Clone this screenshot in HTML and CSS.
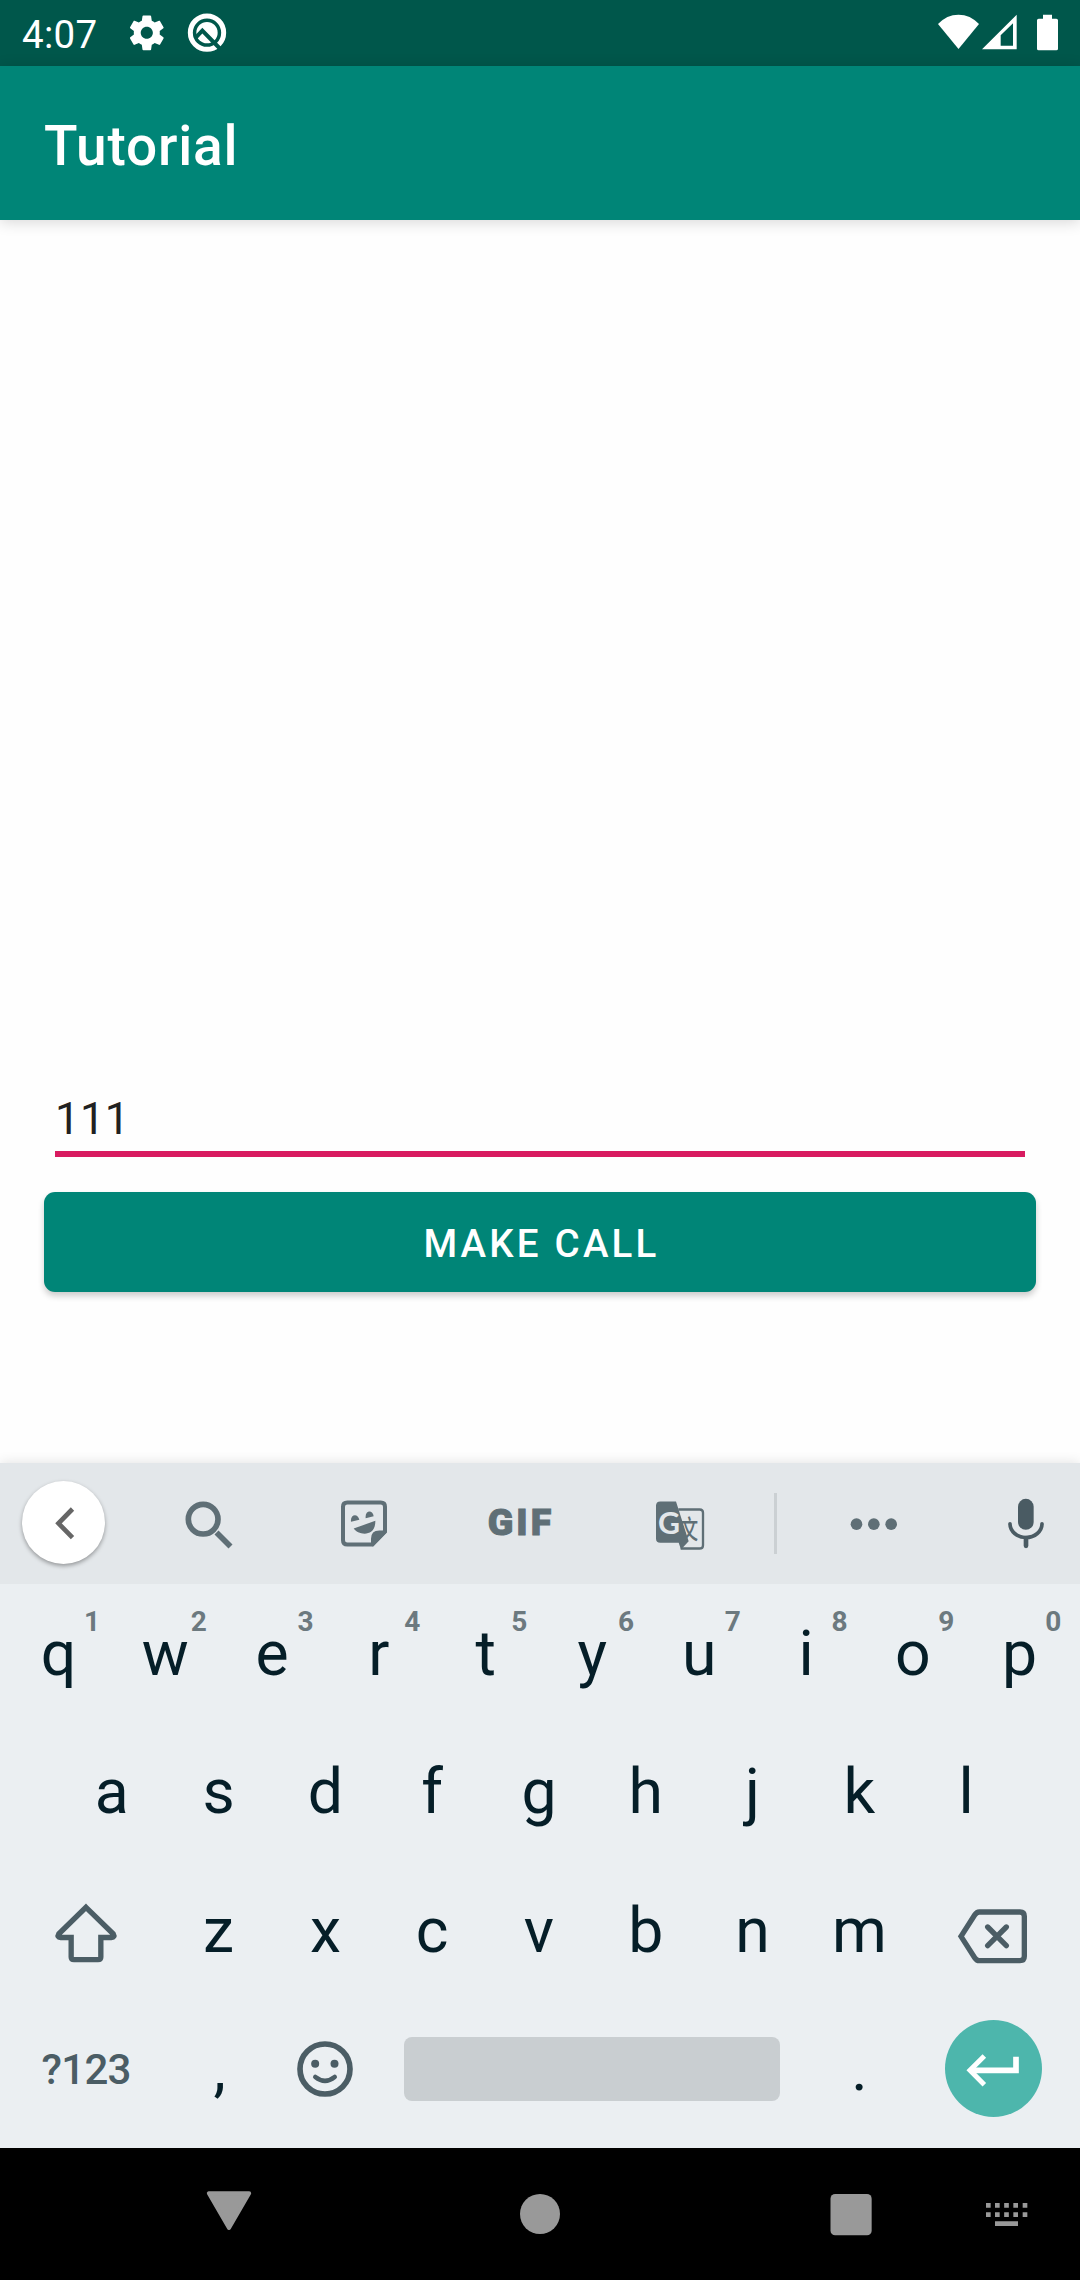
FILE: index.html
```html
<!DOCTYPE html>
<html lang="en">
<head>
<meta charset="utf-8">
<title>Tutorial</title>
<link rel="stylesheet" href="styles.css">
</head>
<body>
<div class="screen">
  <header class="status">
    <span class="clock">4:07</span>
    <svg class="gear" viewBox="0 0 24 24"><path d="M19.43 12.98c.04-.32.07-.64.07-.98s-.03-.66-.07-.98l2.11-1.65c.19-.15.24-.42.12-.64l-2-3.46c-.12-.22-.39-.3-.61-.22l-2.49 1c-.52-.4-1.08-.73-1.69-.98l-.38-2.65C14.46 2.18 14.25 2 14 2h-4c-.25 0-.46.18-.49.42l-.38 2.65c-.61.25-1.17.59-1.69.98l-2.49-1c-.23-.09-.49 0-.61.22l-2 3.46c-.13.22-.07.49.12.64l2.11 1.65c-.04.32-.07.65-.07.98s.03.66.07.98l-2.11 1.65c-.19.15-.24.42-.12.64l2 3.46c.12.22.39.3.61.22l2.49-1c.52.4 1.08.73 1.69.98l.38 2.65c.03.24.24.42.49.42h4c.25 0 .46-.18.49-.42l.38-2.65c.61-.25 1.17-.59 1.69-.98l2.49 1c.23.09.49 0 .61-.22l2-3.46c.12-.22.07-.49-.12-.64l-2.11-1.65zM12 15.5c-1.93 0-3.5-1.57-3.5-3.5s1.57-3.5 3.5-3.5 3.5 1.57 3.5 3.5-1.57 3.5-3.5 3.5z"/></svg>
    <svg class="debug" viewBox="562 40 120 120"><circle class="ring" cx="622" cy="99" r="50"/><circle cx="622" cy="99" r="32"/><path class="cut" d="M586 116L608 93L662 148"/></svg>
    <span class="spacer"></span>
    <svg class="wifi" viewBox="114 40 123 120"><path d="M114 73Q140 45 175.500 45T237 73L175.500 148Z"/></svg>
    <svg class="signal" viewBox="247 40 104 120"><path fill-rule="evenodd" d="M247 149L351 45V149ZM303 138H340V71L303 107Z"/></svg>
    <svg class="battery" viewBox="411 40 63 120"><path d="M429 45H456V57H469Q474 57 474 62V147Q474 152 469 152H416Q411 152 411 147V62Q411 57 416 57H429Z"/></svg>
  </header>
  <div class="appbar"><h1>Tutorial</h1></div>
  <main class="content">
    <div class="field">111</div>
    <button class="call">MAKE CALL</button>
  </main>
  <section class="keyboard">
    <div class="tools">
      <span class="back"><svg class="icon" viewBox="100.500 128 180 180"><path class="line w14" d="M216 176L174 219L216 262"/></svg></span>
      <svg class="icon" viewBox="535.500 130.500 180 180"><circle class="line w17" cx="608" cy="206" r="44.500"/><path class="line w17" d="M648 246L690 288"/></svg>
      <svg class="icon" viewBox="1002 130.500 180 180"><path class="line w12" d="M1042 156H1142Q1155 156 1155 169V243L1116 282H1042Q1029 282 1029 269V169Q1029 156 1042 156Z"/><path d="M1113 286V265Q1113 240 1138 240H1160V247L1120 288ZM1053 214C1050 189 1075 188 1078 208ZM1097 203C1094 178 1119 177 1121 197ZM1061 234L1126 211C1127 262 1074 254 1061 234Z"/></svg>
      <span class="gif">GIF</span>
      <svg class="icon" viewBox="750 130.500 180 180"><path d="M781 153H828L866 272L843 297L836 277H781Q768 277 768 264V166Q768 153 781 153Z"/><path class="line w7" d="M835 177H899Q909 177 909 187V284Q909 294 899 294H842"/><text class="tg" x="807" y="251">G</text><text class="tw" transform="translate(868 264) scale(.88 1.3)">文</text></svg>
      <span class="divider"></span>
      <svg class="icon" viewBox="250.500 130.500 180 180"><circle cx="288" cy="221" r="17.500"/><circle cx="340" cy="221" r="17.500"/><circle cx="392" cy="221" r="17.500"/></svg>
      <svg class="icon dark" viewBox="705 130.500 180 180"><rect x="774" y="145" width="47" height="93" rx="23.500"/><path class="line w11 round" d="M750 220A48 41 0 0 0 846 220"/><path class="line w14 round" d="M798 263V286"/></svg>
    </div>
    <div class="rows">
      <div class="row">
        <span class="key">q<sup>1</sup></span><span class="key">w<sup>2</sup></span><span class="key">e<sup>3</sup></span><span class="key">r<sup>4</sup></span><span class="key">t<sup>5</sup></span><span class="key">y<sup>6</sup></span><span class="key">u<sup>7</sup></span><span class="key">i<sup>8</sup></span><span class="key">o<sup>9</sup></span><span class="key">p<sup>0</sup></span>
      </div>
      <div class="row">
        <span class="key">a</span><span class="key">s</span><span class="key">d</span><span class="key">f</span><span class="key">g</span><span class="key">h</span><span class="key">j</span><span class="key">k</span><span class="key">l</span>
      </div>
      <div class="row">
        <span class="key wide"><svg class="keyicon" viewBox="137 33 240 240"><path class="line w16" d="M257 82L339 162Q345 172 333 172.500H301.500V231Q301.500 239 293 239H221Q212.500 239 212.500 231V172.500H181Q169 172 175 162Z"/></svg></span>
        <span class="key">z</span><span class="key">x</span><span class="key">c</span><span class="key">v</span><span class="key">b</span><span class="key">n</span><span class="key">m</span>
        <span class="key wide"><svg class="keyicon" viewBox="642 33 240 240"><path class="line w16" d="M663 169L704 105Q710 96 718 96H840Q853 96 853 109V229Q853 242 840 242H718Q710 242 704 233Z"/><path class="line w16 round" d="M743 141L799 197M799 141L743 197"/></svg></span>
      </div>
      <div class="row">
        <span class="key wide symbols">?123</span>
        <span class="key comma">,</span>
        <span class="key emoji"><svg class="keyicon" viewBox="858 447 240 240"><circle class="line w17" cx="975" cy="567" r="75"/><circle cx="945.500" cy="551" r="12"/><circle cx="1003.500" cy="551" r="12"/><path class="line w14 round" d="M946 591Q975 614 1004 591"/></svg></span>
        <span class="key space"></span>
        <span class="key">.</span>
        <span class="key wide"><span class="enter"><svg class="keyicon" viewBox="640 445 240 240"><path class="line w17" d="M826 531V572H692"/><path class="line w15" d="M731 529L688 572L731 615"/></svg></span></span>
      </div>
    </div>
  </section>
  <nav class="navbar">
    <svg class="navicon" viewBox="115.500 162 180 180"><path class="tri" d="M145 190H266L205.500 294Z"/></svg>
    <svg class="navicon" viewBox="1050 162 180 180"><circle cx="1140" cy="252" r="60"/></svg>
    <svg class="navicon" viewBox="121.500 162 180 180"><rect x="150" y="192" width="123.500" height="124" rx="14"/></svg>
    <svg class="navicon" viewBox="591 162 180 180"><path d="M618 219h14v14h-14zM645 219h14v14h-14zM672.500 219h14v14h-14zM700 219h14v14h-14zM728 219h14v14h-14zM618 247h14v14h-14zM645 247h14v14h-14zM672.500 247h14v14h-14zM700 247h14v14h-14zM728 247h14v14h-14zM645 274h69v14h-69z"/></svg>
  </nav>
</div>
</body>
</html>
```
FILE: styles.css
```css
* { box-sizing: border-box; }
body { margin: 0; font-family: Roboto, "Liberation Sans", sans-serif; }
svg { display: block; flex: none; }
.screen { width: 1080px; height: 2280px; display: flex; flex-direction: column; background: #fefefe; }

.status { height: 66px; padding: 0 22px; display: flex; align-items: center; background: #00574b; color: #fff; fill: #fff; }
.clock { width: 76px; font-size: 38.5px; line-height: 66px; padding-top: 3px; letter-spacing: .3px; white-space: nowrap; }
.gear { width: 41.600px; height: 41.600px; margin-left: 27.500px; }
.debug { width: 40px; height: 40px; margin-left: 20.300px; }
.ring { fill: none; stroke: #fff; stroke-width: 15; }
.cut { fill: none; stroke: #00574b; stroke-width: 12; }
.spacer { flex: 1; }
.wifi { width: 41px; height: 40px; margin-right: 3.300px; }
.signal { width: 34.700px; height: 40px; margin-right: 20px; }
.battery { width: 21px; height: 40px; }

.appbar { height: 154px; padding-left: 44px; display: flex; align-items: center; background: #008577; box-shadow: 0 2px 14px rgba(0, 0, 0, .16); }
h1 { margin: 0; font-size: 55px; font-weight: 500; line-height: 64px; letter-spacing: .8px; padding-top: 6px; color: #fff; }

.content { flex: 1; padding: 850px 44px 0; }
.field { margin: 0 11px; height: 87px; padding-top: 23px; border-bottom: 6px solid #d81b60; font-size: 44px; line-height: 52px; letter-spacing: .2px; color: #212121; }
.call { display: block; width: 100%; height: 100px; margin-top: 35px; padding: 2px 0 0 3px; border: 0; border-radius: 11px; background: #008577; color: #fff; font: 500 38.5px Roboto, sans-serif; letter-spacing: 3.200px; box-shadow: 0 4px 6px rgba(0, 0, 0, .2); }

.keyboard { height: 685px; background: #ebeff2; box-shadow: 0 0 12px rgba(0, 0, 0, .12); }
.tools { height: 121px; display: grid; grid-template-columns: 127px 163px 148px 164px 156px 19px 193px 110px; align-items: center; justify-items: center; background: #e3e7ea; color: #5f6f76; }
.icon { width: 60px; height: 60px; fill: currentColor; }
.dark { color: #4a5b63; }
.line { fill: none; stroke: currentColor; }
.round { stroke-linecap: round; }
.w7 { stroke-width: 7; }
.w11 { stroke-width: 11; }
.w12 { stroke-width: 12; }
.w14 { stroke-width: 14; }
.w15 { stroke-width: 15; }
.w16 { stroke-width: 16; }
.w17 { stroke-width: 17; }
.back { width: 83px; height: 83px; margin-bottom: 2px; border-radius: 50%; display: grid; place-items: center; background: #fff; color: #666; box-shadow: 0 2px 4px rgba(0, 0, 0, .35); }
.gif { font-size: 37.500px; font-weight: 900; line-height: 44px; letter-spacing: 3px; padding: 0 0 3px 2px; -webkit-text-stroke: 1px currentColor; }
.tg { font: 700 91px Lato, Roboto, sans-serif; fill: #e3e7ea; text-anchor: middle; }
.tw { font: 500 60px "Noto Sans CJK SC", sans-serif; text-anchor: middle; }
.divider { width: 3px; height: 61px; justify-self: end; background: #cbd0d3; }

.rows { padding: 1px 5px 0; }
.row { height: 138.300px; display: flex; justify-content: center; }
.key { position: relative; width: 106.800px; padding-right: 2px; display: flex; align-items: center; justify-content: center; font-size: 62.500px; line-height: 72px; color: #051e28; }
.key sup { position: absolute; left: 71px; top: 21px; width: 30px; text-align: center; font-size: 28px; line-height: 32px; font-weight: 700; color: #6c797f; }
.wide { width: 160.200px; padding-right: 0; color: #4b5d65; }
.symbols { padding-top: 1px; font-size: 42px; font-weight: 500; letter-spacing: -.7px; }
.comma, .emoji { padding-right: 0; }
.keyicon { width: 80px; height: 80px; fill: currentColor; }
.space { width: 427.200px; }
.space::before { content: ""; width: 376px; height: 64px; border-radius: 8px; background: #c9ced1; }
.enter { width: 97px; height: 97px; border-radius: 50%; display: grid; place-items: center; margin-bottom: 2px; background: #4db6ac; color: #fff; }
.key:has(.keyicon) { color: #4b5d65; }

.navbar { height: 132px; padding-left: 144px; display: grid; grid-template-columns: 169px 454px 167px 146px; align-items: center; justify-items: center; background: #000; }
.navicon { width: 60px; height: 60px; fill: #999; }
.tri { stroke: #999; stroke-width: 12; stroke-linejoin: round; }
```
